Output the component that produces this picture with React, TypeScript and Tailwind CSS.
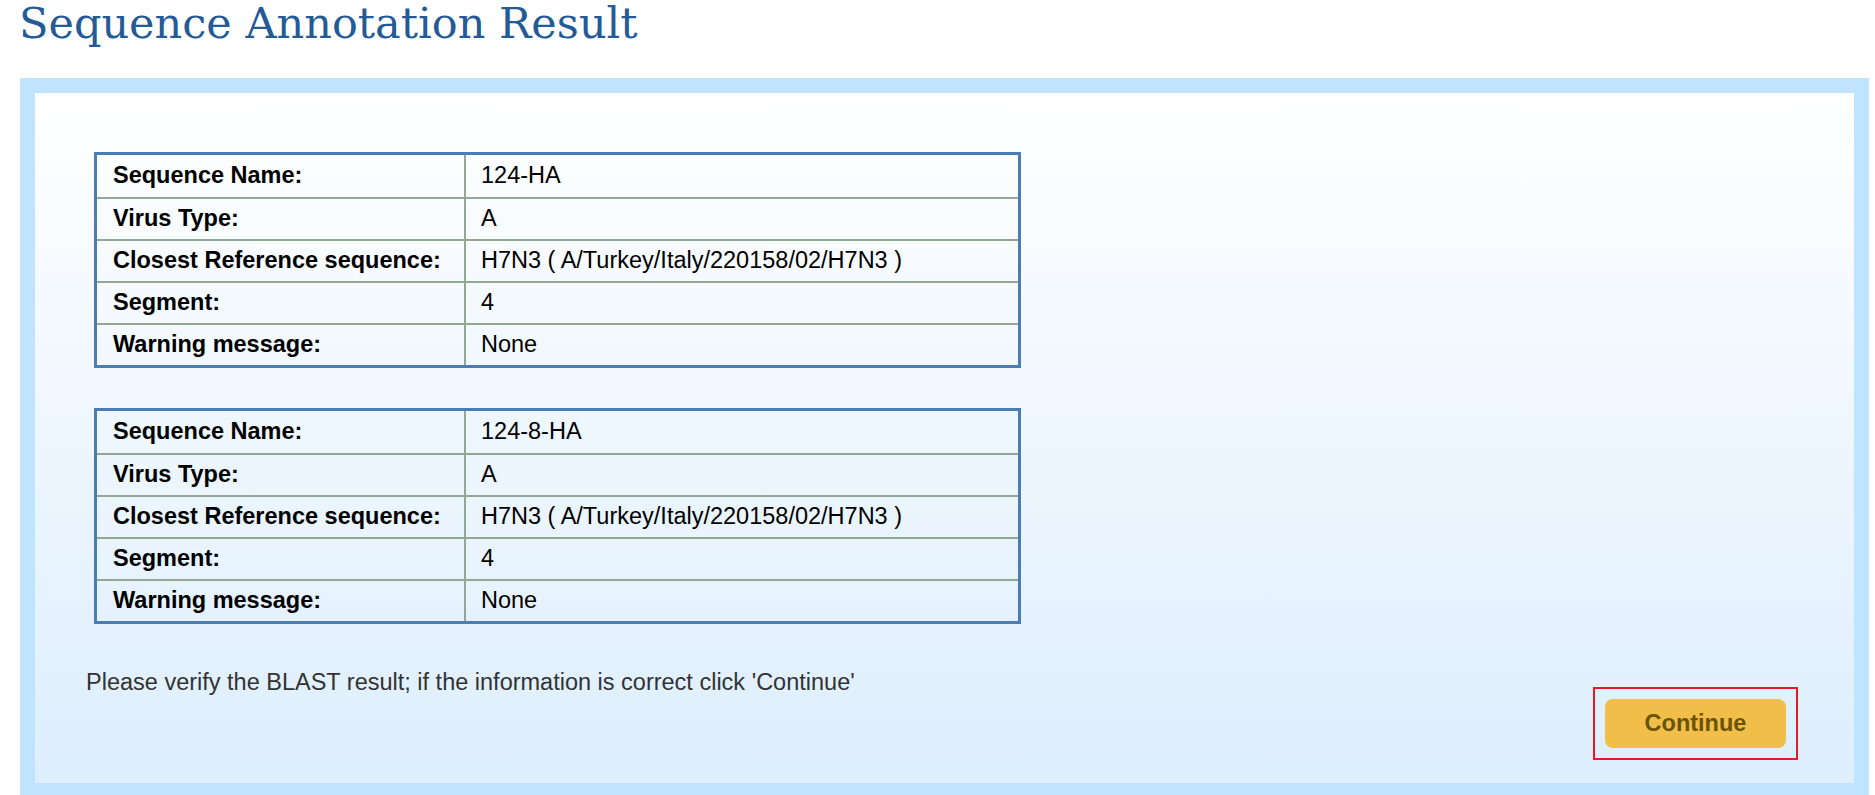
const results = [
  {
    name: '124-HA',
    type: 'A',
    reference: 'H7N3 ( A/Turkey/Italy/220158/02/H7N3 )',
    segment: '4',
    warning: 'None',
  },
  {
    name: '124-8-HA',
    type: 'A',
    reference: 'H7N3 ( A/Turkey/Italy/220158/02/H7N3 )',
    segment: '4',
    warning: 'None',
  },
];

type Result = (typeof results)[number];

function ResultTable({ result }: { result: Result }) {
  const rows = [
    ['Sequence Name:', result.name],
    ['Virus Type:', result.type],
    ['Closest Reference sequence:', result.reference],
    ['Segment:', result.segment],
    ['Warning message:', result.warning],
  ];

  return (
    <div className="w-[927px] border-[3px] border-[#4a7db5] text-black">
      {rows.map(([label, value], i) => (
        <div
          key={label}
          className={`grid grid-cols-[369px_1fr] h-[42px] ${i > 0 ? 'border-t-2 border-[#92a892]' : ''}`}
        >
          <div className="flex items-center pl-4 font-bold border-r-2 border-[#92a892]">{label}</div>
          <div className="flex items-center pl-[15px]">{value}</div>
        </div>
      ))}
    </div>
  );
}

export default function App() {
  return (
    <div className="min-h-[795px] bg-white overflow-hidden font-['Liberation_Sans',Arial,sans-serif] text-[23.5px]">
      {/* Page title */}
      <h1 className="pl-[19px] font-['DejaVu_Serif',Georgia,serif] text-[43px] leading-[47px] font-normal text-[#245b97]">
        Sequence Annotation Result
      </h1>

      {/* Result panel */}
      <div className="mt-[31px] ml-[20px] mr-[6px] border-[15px] border-b-[12px] border-[#c0e3fe] bg-gradient-to-b from-white to-[#ddeefd]">
        <div className="pt-[59px] pl-[51px] pr-[56px] pb-[23px]">
          <div className="ml-2">
            <ResultTable result={results[0]} />
            <div className="mt-[40px]">
              <ResultTable result={results[1]} />
            </div>
          </div>

          <div className="mt-[41px] flex items-start justify-between">
            <p className="text-[#333333]">
              Please verify the BLAST result; if the information is correct click 'Continue'
            </p>
            <div className="mt-[22px] border-2 border-[#e31b23] p-[10px]">
              <button className="w-[181px] h-[49px] rounded-lg bg-[#f1be4a] font-bold text-[#6b5302]">
                Continue
              </button>
            </div>
          </div>
        </div>
      </div>
    </div>
  );
}
